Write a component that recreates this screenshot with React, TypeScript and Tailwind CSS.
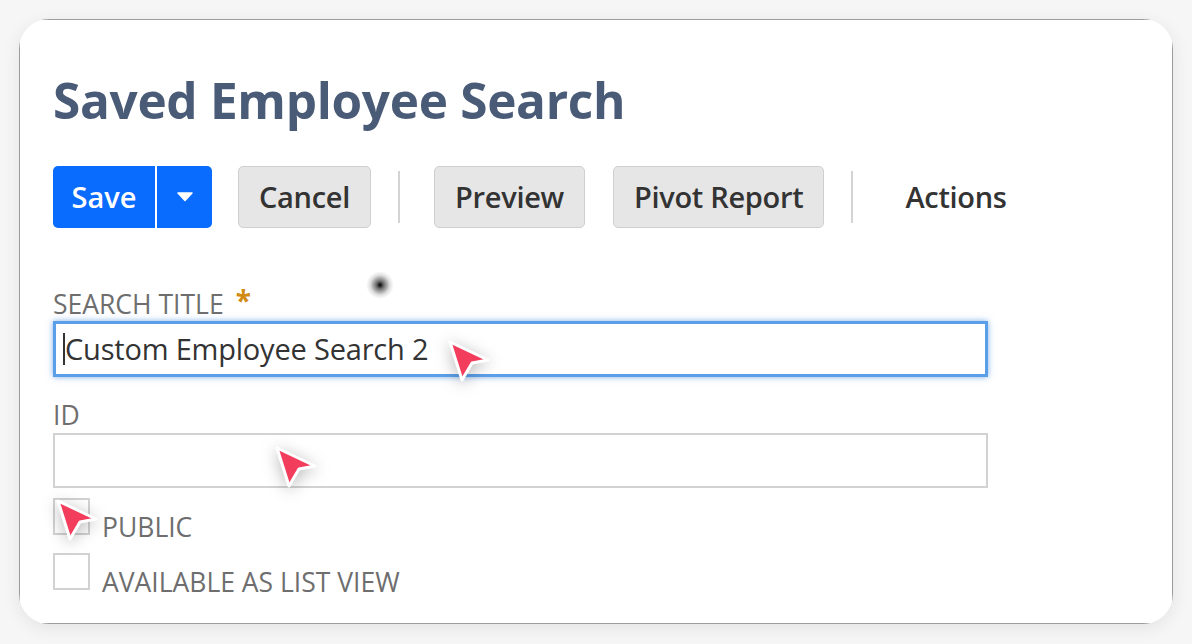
import React from 'react';

function Pointer({ className }: { className: string }) {
  return (
    <svg
      viewBox="-4 -4 48 48"
      className={`absolute w-[48px] h-[48px] pointer-events-none drop-shadow-[0_3px_8px_rgba(0,0,0,0.28)] ${className}`}
    >
      <polygon
        points="0,0 38,18 22,21 12,38"
        fill="#f23d5c"
        stroke="#ffffff"
        strokeWidth="3"
        strokeLinejoin="round"
      />
    </svg>
  );
}

function ToolButton({ label }: { label: string }) {
  return (
    <button className="h-[62px] px-[20px] rounded-[5px] bg-[#e6e6e6] border border-[#cfcfcf] text-[#333] text-[29px] font-semibold tracking-[-0.3px]">
      {label}
    </button>
  );
}

export default function App() {
  return (
    <div
      className="w-[1192px] h-[644px] bg-[#f6f6f6] pt-[19px] pl-[19px]"
      style={{ fontFamily: '"Open Sans", "Noto Sans", sans-serif' }}
    >
      <div className="relative w-[1154px] h-[605px] rounded-[30px] overflow-hidden bg-white shadow-[0_4px_18px_rgba(0,0,0,0.08)]">
        <div className="w-full h-full border border-[#9d9d9d] pl-[33px] pt-[48px]">
          {/* Title */}
          <h1 className="text-[49.5px] leading-[64px] font-bold text-[#4a5b77] tracking-[-0.3px]">
            Saved Employee Search
          </h1>

          {/* Toolbar */}
          <div className="flex items-center mt-[34px]">
            <div className="flex h-[62px] rounded-[5px] bg-[#0a6bff] text-white">
              <button className="w-[102px] text-[29px] font-semibold">Save</button>
              <div className="w-[2px] bg-white" />
              <button className="w-[55px] flex items-center justify-center">
                <svg width="16" height="10" viewBox="0 0 16 10">
                  <path d="M1 1 H15 L8 8.5 Z" fill="#fff" stroke="#fff" strokeWidth="1.5" strokeLinejoin="round" />
                </svg>
              </button>
            </div>
            <div className="ml-[26px]">
              <ToolButton label="Cancel" />
            </div>
            <div className="w-[2px] h-[52px] bg-[#d4d4d4] ml-[27px] mr-[34px]" />
            <ToolButton label="Preview" />
            <div className="ml-[28px]">
              <ToolButton label="Pivot Report" />
            </div>
            <div className="w-[2px] h-[52px] bg-[#d4d4d4] ml-[27px] mr-[52px]" />
            <span className="text-[29px] font-semibold text-[#333] tracking-[-0.3px]">Actions</span>
          </div>

          {/* Search title */}
          <div className="mt-[59px] flex items-center text-[26.5px] text-[#6e6e6e] leading-[34px]">
            SEARCH TITLE
            <span className="ml-[12px] -mt-[8px] text-[#d18a12] font-bold text-[28px]">*</span>
          </div>
          <div className="w-[935px] h-[56px] border-[3px] border-[#5c9fe9] shadow-[0_0_6px_rgba(74,144,226,0.7)] flex items-center pl-[7px]">
            <span className="w-[2px] h-[32px] bg-[#333]" />
            <span className="text-[29px] text-[#333] tracking-[-0.2px]">Custom Employee Search 2</span>
          </div>

          {/* ID */}
          <div className="mt-[21px] text-[26.5px] text-[#6e6e6e] leading-[34px]">ID</div>
          <div className="mt-[1px] w-[935px] h-[55px] border-2 border-[#d2d2d2]" />

          {/* Checkboxes */}
          <div className="mt-[10px] flex items-end gap-[12px]">
            <div className="w-[37px] h-[37px] border-2 border-[#d2d2d2]" />
            <span className="text-[26.5px] text-[#6e6e6e] leading-[26px] -mb-[5px]">PUBLIC</span>
          </div>
          <div className="mt-[18px] flex items-end gap-[12px]">
            <div className="w-[37px] h-[37px] border-2 border-[#d2d2d2]" />
            <span className="text-[26.5px] text-[#6e6e6e] leading-[26px] -mb-[5px]">AVAILABLE AS LIST VIEW</span>
          </div>
        </div>

        {/* Overlays: cursor pointers and blur dot */}
        <div className="absolute left-[347px] top-[252px] w-[28px] h-[28px] rounded-full bg-[radial-gradient(circle,#000_0%,rgba(0,0,0,0.55)_20%,rgba(0,0,0,0.12)_50%,rgba(0,0,0,0)_70%)]" />
        <Pointer className="left-[427px] top-[319px]" />
        <Pointer className="left-[254px] top-[425px]" />
        <Pointer className="left-[35px] top-[478px]" />
      </div>
    </div>
  );
}
